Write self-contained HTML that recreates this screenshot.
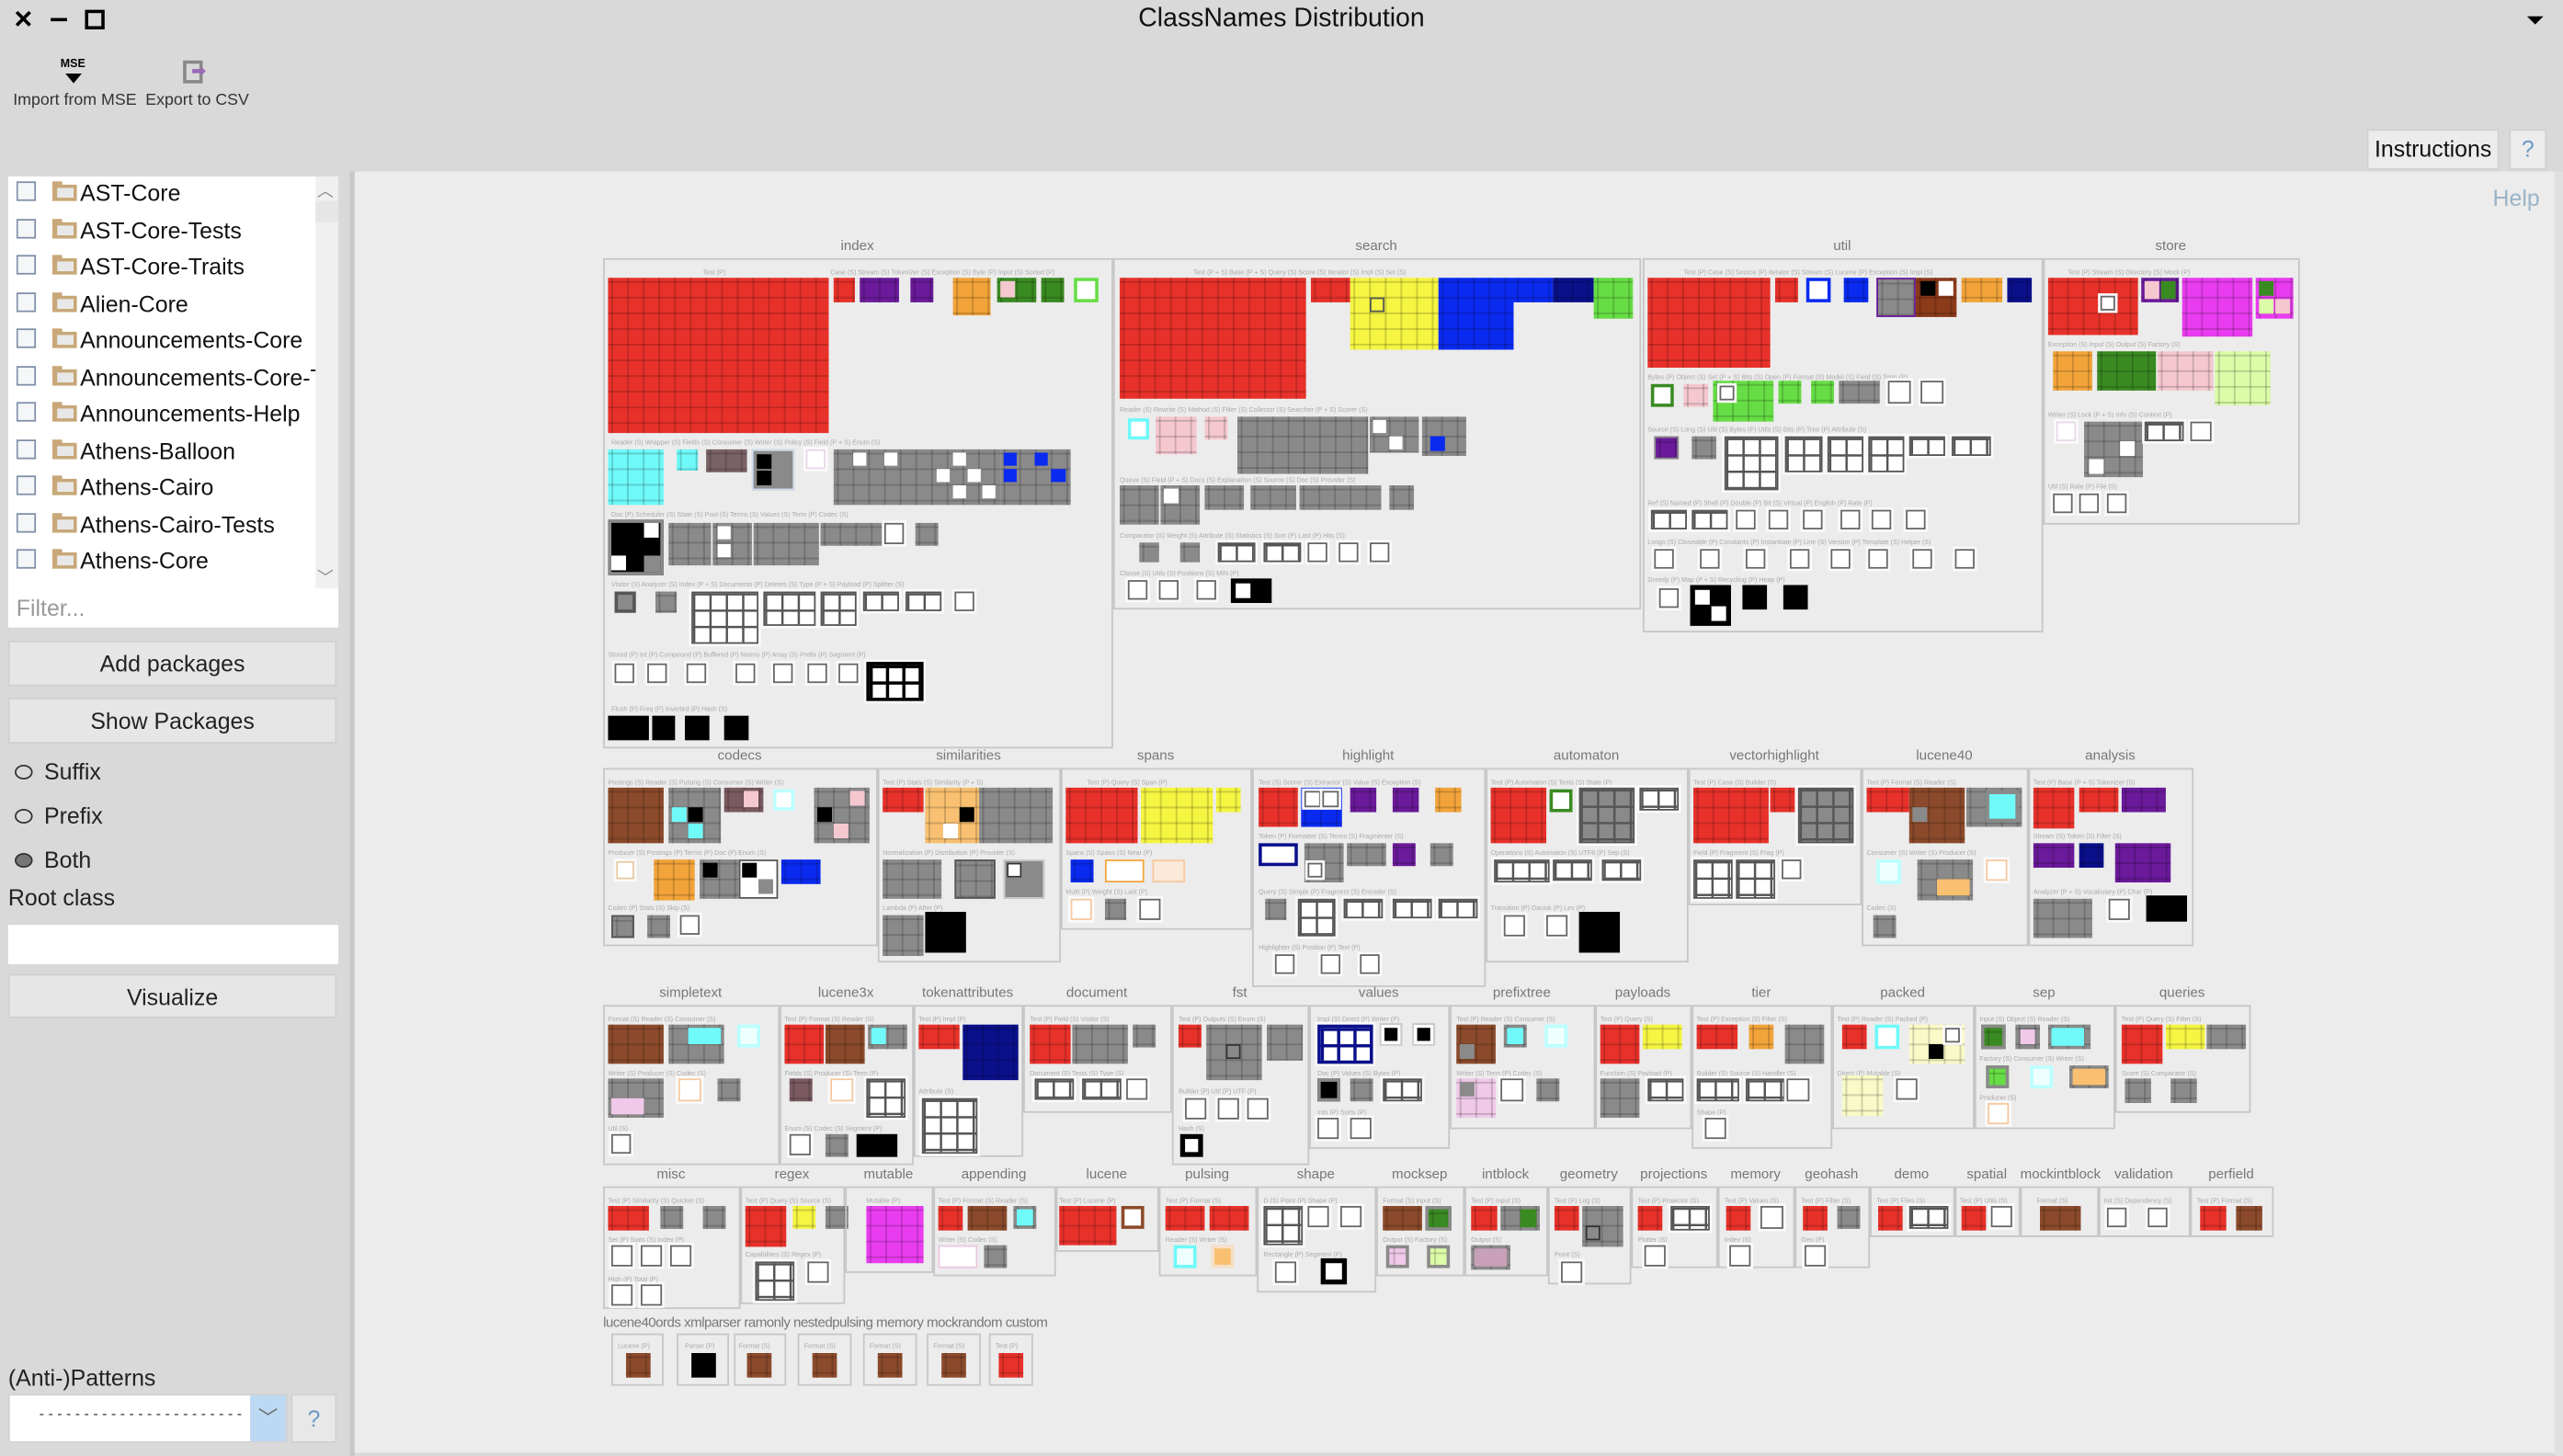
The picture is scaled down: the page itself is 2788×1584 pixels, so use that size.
<!DOCTYPE html>
<html><head><meta charset="utf-8">
<style>
html,body{margin:0;padding:0;width:2788px;height:1584px;overflow:hidden;background:#d9d9d9;font-family:"Liberation Sans",sans-serif}
#w{position:absolute;left:0;top:0;width:1568px;height:891px;transform:scale(1.77806,1.77778);transform-origin:0 0;background:#d9d9d9}
.a{position:absolute}
i{position:absolute;display:block;box-sizing:border-box}
.g{background-image:linear-gradient(rgba(0,0,0,.17) 1px,transparent 1px),linear-gradient(90deg,rgba(0,0,0,.17) 1px,transparent 1px);background-size:9.6px 9.6px;background-position:2px 2px}
.w{background:#fff;border:1.5px solid #666;box-shadow:0 0 0 1.5px #fafafa}
.wg{background-color:#fff;border:1.5px solid #555;background-image:linear-gradient(#555 1.5px,transparent 1.5px),linear-gradient(90deg,#555 1.5px,transparent 1.5px);background-size:10px 10px;box-shadow:0 0 0 1.5px #fafafa}
.pk{position:absolute;border:1px solid #c6c6c6;box-sizing:border-box}
.lb{position:absolute;font-size:8.5px;color:#777;text-align:center;white-space:nowrap}
.t{position:absolute;font-size:4px;color:#aaa;white-space:nowrap}
.btn{position:absolute;left:5px;width:201px;height:28px;background:#e6e6e6;border:1px solid #d0d0d0;box-sizing:border-box;font-size:14px;text-align:center;line-height:27px;color:#222}
.row{position:absolute;left:10px;width:183px;overflow:hidden;font-size:14px;color:#111;height:20px;line-height:20px;white-space:nowrap}
.row span{white-space:nowrap}
.cb{position:absolute;left:0;top:3px;width:12px;height:12px;border:1px solid #8090a8;background:#f4f6f8;box-sizing:border-box}
.fd{position:absolute;left:22px;top:5px;width:15px;height:10px;background:#c8a878}
.fd:before{content:"";position:absolute;left:0;top:-2px;width:6px;height:3px;background:#c8a878}
.fd:after{content:"";position:absolute;left:3px;top:2px;width:10px;height:6px;background:#e8e8e8}
.rd{position:absolute;left:9px;width:11px;height:9px;border:1px solid #333;border-radius:50%;box-sizing:border-box}
.rl{position:absolute;left:27px;font-size:14px;color:#222}
</style></head><body><div id="w">

<!-- title bar -->
<div class="a" style="left:8px;top:3px;font-size:15px;font-weight:bold">✕</div>
<div class="a" style="left:31px;top:11px;width:10px;height:2px;background:#000"></div>
<div class="a" style="left:52px;top:6px;width:8px;height:8px;border:2px solid #000"></div>
<div class="a" style="left:0;width:1568px;top:3px;text-align:center;font-size:16px;color:#111">ClassNames Distribution</div>
<div class="a" style="left:1546px;top:10px;width:0;height:0;border-left:5px solid transparent;border-right:5px solid transparent;border-top:5px solid #000"></div>

<!-- toolbar -->
<div class="a" style="left:37px;top:36px;font-size:7px;font-weight:bold">MSE</div>
<div class="a" style="left:40px;top:45px;width:0;height:0;border-left:5px solid transparent;border-right:5px solid transparent;border-top:6px solid #000"></div>
<div class="a" style="left:8px;top:56px;font-size:10px;color:#333">Import from MSE</div>
<div class="a" style="left:112px;top:37px;width:12px;height:14px;border:2px solid #888;box-sizing:border-box"></div>
<div class="a" style="left:117px;top:42px;color:#9a6ab8;font-size:11px;line-height:5px">➡</div>
<div class="a" style="left:89px;top:56px;font-size:10px;color:#333">Export to CSV</div>

<!-- left list -->
<div class="a" style="left:5px;top:108px;width:202px;height:276px;background:#fff"></div>
<div class="a" style="left:193px;top:108px;width:14px;height:252px;background:#f0f0f0"></div>
<div class="a" style="left:194px;top:108px;font-size:10px;color:#888">︿</div>
<div class="a" style="left:194px;top:345px;font-size:10px;color:#888">﹀</div>
<div class="a" style="left:193px;top:123px;width:14px;height:13px;background:#e6e6e6"></div>
<div class="row" style="top:108px"><span class="cb"></span><span class="fd"></span><span style="position:absolute;left:39px">AST-Core</span></div>
<div class="row" style="top:130.5px"><span class="cb"></span><span class="fd"></span><span style="position:absolute;left:39px">AST-Core-Tests</span></div>
<div class="row" style="top:153px"><span class="cb"></span><span class="fd"></span><span style="position:absolute;left:39px">AST-Core-Traits</span></div>
<div class="row" style="top:175.5px"><span class="cb"></span><span class="fd"></span><span style="position:absolute;left:39px">Alien-Core</span></div>
<div class="row" style="top:198px"><span class="cb"></span><span class="fd"></span><span style="position:absolute;left:39px">Announcements-Core</span></div>
<div class="row" style="top:220.5px"><span class="cb"></span><span class="fd"></span><span style="position:absolute;left:39px">Announcements-Core-Tests</span></div>
<div class="row" style="top:243px"><span class="cb"></span><span class="fd"></span><span style="position:absolute;left:39px">Announcements-Help</span></div>
<div class="row" style="top:265.5px"><span class="cb"></span><span class="fd"></span><span style="position:absolute;left:39px">Athens-Balloon</span></div>
<div class="row" style="top:288px"><span class="cb"></span><span class="fd"></span><span style="position:absolute;left:39px">Athens-Cairo</span></div>
<div class="row" style="top:310.5px"><span class="cb"></span><span class="fd"></span><span style="position:absolute;left:39px">Athens-Cairo-Tests</span></div>
<div class="row" style="top:333px"><span class="cb"></span><span class="fd"></span><span style="position:absolute;left:39px">Athens-Core</span></div>
<div class="a" style="left:10px;top:364px;font-size:14px;color:#999">Filter...</div>

<div class="btn" style="top:392px">Add packages</div>
<div class="btn" style="top:427px">Show Packages</div>
<div class="rd" style="top:468px"></div><div class="rl" style="top:464px">Suffix</div>
<div class="rd" style="top:495px"></div><div class="rl" style="top:491px">Prefix</div>
<div class="rd" style="top:522px;background:#777"></div><div class="rl" style="top:518px">Both</div>
<div class="a" style="left:5px;top:541px;font-size:14px;color:#222">Root class</div>
<div class="a" style="left:5px;top:566px;width:202px;height:24px;background:#fff"></div>
<div class="btn" style="top:596px;height:27px">Visualize</div>
<div class="a" style="left:5px;top:835px;font-size:14px;color:#222">(Anti-)Patterns</div>
<div class="a" style="left:5px;top:853px;width:171px;height:30px;background:#fff;border:1px solid #d0d0d0;box-sizing:border-box"></div>
<div class="a" style="left:24px;top:860px;font-size:9px;color:#333">- - - - - - - - - - - - - - - - - - - - - - -</div>
<div class="a" style="left:153px;top:854px;width:22px;height:28px;background:#bcd8f2"></div>
<div class="a" style="left:158px;top:859px;font-size:12px;color:#666">﹀</div>
<div class="a" style="left:178px;top:853px;width:28px;height:30px;background:#e8e8e8;border:1px solid #d0d0d0;box-sizing:border-box;text-align:center;line-height:28px;font-size:14px;color:#6a9ac8">?</div>

<!-- right area -->
<div class="a" style="left:214px;top:105px;width:3px;height:786px;background:#c8c8c8"></div>
<div class="a" style="left:217px;top:105px;width:1346px;height:784px;background:#ececec"></div>
<div class="a" style="left:1563px;top:105px;width:5px;height:786px;background:#e0e0e0"></div>
<div class="a" style="left:1448px;top:79px;width:81px;height:25px;background:#ececec;border:1px solid #d0d0d0;box-sizing:border-box;font-size:14px;text-align:center;line-height:23px;color:#111">Instructions</div>
<div class="a" style="left:1535px;top:79px;width:23px;height:25px;background:#ececec;border:1px solid #d0d0d0;box-sizing:border-box;font-size:14px;text-align:center;line-height:23px;color:#6a9ac8">?</div>
<div class="a" style="left:1525px;top:113px;font-size:14px;color:#9ab4c8">Help</div>

<!-- ===== Row 1 ===== -->
<div class="lb" style="left:369px;width:311px;top:145px">index</div>
<div class="pk" style="left:369px;top:158px;width:312px;height:300px"></div>
<div class="t" style="left:430px;top:164px">Test (P)</div><div class="t" style="left:508px;top:164px">Case (S) Stream (S) Tokenizer (S) Exception (S) Byte (P) Input (S) Sorted (P)</div>
<i class="g" style="left:372px;top:170px;width:135px;height:95px;background-color:#e8312a"></i>
<i class="g" style="left:510px;top:170px;width:13px;height:15px;background-color:#e8312a"></i>
<i class="g" style="left:526px;top:170px;width:24px;height:15px;background-color:#6a1a9a"></i>
<i class="g" style="left:557px;top:170px;width:14px;height:15px;background-color:#6a1a9a"></i>
<i class="g" style="left:583px;top:170px;width:23px;height:23px;background-color:#f2a43a"></i>
<i class="g" style="left:610px;top:170px;width:24px;height:15px;background-color:#3a8a22"></i><i style="left:612px;top:172px;width:9px;height:10px;background:#f5c8d0"></i>
<i class="g" style="left:637px;top:170px;width:14px;height:15px;background-color:#3a8a22"></i>
<i style="left:657px;top:170px;width:15px;height:15px;background:#fff;border:2.5px solid #66dd44"></i>
<div class="t" style="left:374px;top:268px">Reader (S) Wrapper (S) Fields (S) Consumer (S) Writer (S)   Policy (S)   Field (P + S)   Enum (S)</div>
<i class="g" style="left:372px;top:275px;width:34px;height:34px;background-color:#6ff9f9"></i>
<i class="g" style="left:414px;top:275px;width:13px;height:13px;background-color:#6ff9f9"></i>
<i class="g" style="left:432px;top:275px;width:25px;height:14px;background-color:#7a6266"></i>
<i style="left:460px;top:275px;width:26px;height:25px;background:#8a8a8a;border:1px solid #cde"></i><i style="left:463px;top:278px;width:9px;height:9px;background:#000"></i><i style="left:463px;top:288px;width:9px;height:9px;background:#000"></i>
<i class="w" style="left:493px;top:275px;width:12px;height:12px;border-color:#e8d8e8"></i>
<i class="g" style="left:510px;top:275px;width:102px;height:34px;background-color:#8a8a8a"></i>
<i style="left:522px;top:277px;width:8px;height:8px;background:#fff"></i><i style="left:541px;top:277px;width:8px;height:8px;background:#fff"></i><i style="left:583px;top:277px;width:8px;height:8px;background:#fff"></i><i style="left:573px;top:287px;width:8px;height:8px;background:#fff"></i><i style="left:592px;top:287px;width:8px;height:8px;background:#fff"></i><i style="left:583px;top:297px;width:8px;height:8px;background:#fff"></i><i style="left:601px;top:297px;width:8px;height:8px;background:#fff"></i>
<i class="g" style="left:612px;top:275px;width:43px;height:34px;background-color:#8a8a8a"></i>
<i style="left:614px;top:277px;width:8px;height:8px;background:#0a2af0"></i><i style="left:633px;top:277px;width:8px;height:8px;background:#0a2af0"></i><i style="left:614px;top:287px;width:8px;height:8px;background:#0a2af0"></i><i style="left:643px;top:287px;width:9px;height:8px;background:#0a2af0"></i>
<div class="t" style="left:374px;top:312px">Doc (P)  Scheduler (S) State (S) Pool (S) Terms (S) Values (S) Term (P) Codec (S)</div>
<i style="left:372px;top:318px;width:34px;height:34px;background:#000;border:2px solid #8a8a8a"></i><i style="left:394px;top:320px;width:9px;height:9px;background:#fff"></i><i style="left:374px;top:340px;width:9px;height:9px;background:#fff"></i><i style="left:394px;top:340px;width:10px;height:10px;background:#8a8a8a"></i>
<i class="g" style="left:409px;top:320px;width:26px;height:26px;background-color:#8a8a8a"></i>
<i class="g" style="left:436px;top:320px;width:24px;height:26px;background-color:#8a8a8a"></i><i style="left:439px;top:322px;width:8px;height:8px;background:#fff"></i><i style="left:439px;top:333px;width:8px;height:8px;background:#fff"></i>
<i class="g" style="left:461px;top:320px;width:40px;height:26px;background-color:#8a8a8a"></i>
<i class="g" style="left:502px;top:320px;width:40px;height:14px;background-color:#8a8a8a"></i>
<i class="w" style="left:541px;top:320px;width:12px;height:13px"></i>
<i class="g" style="left:560px;top:320px;width:14px;height:14px;background-color:#8a8a8a"></i>
<div class="t" style="left:374px;top:355px">Visitor (S) Analyzer (S)  Index (P + S)  Documents (P) Deletes (S) Type (P + S) Payload (P) Splitter (S)</div>
<i style="left:376px;top:362px;width:13px;height:13px;background:#8a8a8a;border:2px solid #555"></i>
<i class="g" style="left:401px;top:362px;width:13px;height:13px;background-color:#8a8a8a"></i>
<i class="wg" style="left:423px;top:362px;width:41px;height:32px"></i>
<i class="wg" style="left:467px;top:362px;width:32px;height:21px"></i>
<i class="wg" style="left:502px;top:362px;width:22px;height:21px"></i>
<i class="wg" style="left:528px;top:362px;width:22px;height:12px"></i>
<i class="wg" style="left:554px;top:362px;width:22px;height:12px"></i>
<i class="w" style="left:584px;top:362px;width:12px;height:12px"></i>
<div class="t" style="left:372px;top:398px">Stored (P) Int (P) Compound (P) Buffered (P) Norms (P) Array (S) Prefix (P)  Segment (P)</div>
<i class="w" style="left:376px;top:406px;width:12px;height:12px"></i><i class="w" style="left:396px;top:406px;width:12px;height:12px"></i><i class="w" style="left:420px;top:406px;width:12px;height:12px"></i><i class="w" style="left:450px;top:406px;width:12px;height:12px"></i><i class="w" style="left:473px;top:406px;width:12px;height:12px"></i><i class="w" style="left:494px;top:406px;width:12px;height:12px"></i><i class="w" style="left:513px;top:406px;width:12px;height:12px"></i>
<i class="wg" style="left:530px;top:405px;width:35px;height:24px;border:2.5px solid #000;background-image:linear-gradient(#000 2px,transparent 2px),linear-gradient(90deg,#000 2px,transparent 2px)"></i>
<div class="t" style="left:374px;top:431px">Flush (P) Freq (P) Inverted (P) Hash (S)</div>
<i style="left:372px;top:438px;width:25px;height:15px;background:#000"></i><i style="left:399px;top:438px;width:14px;height:15px;background:#000"></i><i style="left:419px;top:438px;width:15px;height:15px;background:#000"></i><i style="left:443px;top:438px;width:15px;height:15px;background:#000"></i>

<div class="lb" style="left:681px;width:322px;top:145px">search</div>
<div class="pk" style="left:681px;top:158px;width:323px;height:215px"></div>
<div class="t" style="left:730px;top:164px">Test (P + S)   Base (P + S)  Query (S)   Score (S) Iterator (S) Impl (S) Set (S)</div>
<i class="g" style="left:685px;top:170px;width:114px;height:74px;background-color:#e8312a"></i>
<i class="g" style="left:802px;top:170px;width:24px;height:15px;background-color:#e8312a"></i>
<i class="g" style="left:826px;top:170px;width:54px;height:44px;background-color:#f5f542"></i><i style="left:838px;top:182px;width:9px;height:9px;border:1px solid #555"></i>
<i class="g" style="left:880px;top:170px;width:46px;height:44px;background-color:#0a2af0"></i>
<i class="g" style="left:926px;top:170px;width:24px;height:15px;background-color:#0a2af0"></i>
<i class="g" style="left:950px;top:170px;width:25px;height:15px;background-color:#0a108a"></i>
<i class="g" style="left:975px;top:170px;width:24px;height:25px;background-color:#66dd44"></i>
<div class="t" style="left:685px;top:248px">Reader (S) Rewrite (S) Method (S)  Filter (S)  Collector (S) Searcher (P + S) Scorer (S)</div>
<i style="left:690px;top:256px;width:13px;height:13px;background:#fff;border:2px solid #6ff9f9"></i>
<i class="g" style="left:707px;top:255px;width:25px;height:23px;background-color:#f5c8d0"></i>
<i class="g" style="left:737px;top:255px;width:14px;height:14px;background-color:#f5c8d0"></i>
<i class="g" style="left:757px;top:255px;width:80px;height:35px;background-color:#8a8a8a"></i>
<i class="g" style="left:838px;top:255px;width:30px;height:22px;background-color:#8a8a8a"></i><i style="left:840px;top:257px;width:8px;height:8px;background:#fff"></i><i style="left:850px;top:267px;width:8px;height:8px;background:#fff"></i>
<i class="g" style="left:870px;top:255px;width:27px;height:24px;background-color:#8a8a8a"></i><i style="left:875px;top:267px;width:9px;height:9px;background:#0a2af0"></i>
<div class="t" style="left:685px;top:291px">Queue (S) Field (P + S) Docs (S) Explanation (S) Source (S) Doc (S) Provider (S)</div>
<i class="g" style="left:685px;top:297px;width:24px;height:24px;background-color:#8a8a8a"></i>
<i class="g" style="left:710px;top:297px;width:24px;height:24px;background-color:#8a8a8a"></i><i style="left:712px;top:299px;width:9px;height:9px;background:#fff"></i>
<i class="g" style="left:737px;top:297px;width:24px;height:15px;background-color:#8a8a8a"></i>
<i class="g" style="left:765px;top:297px;width:28px;height:15px;background-color:#8a8a8a"></i>
<i class="g" style="left:795px;top:297px;width:50px;height:15px;background-color:#8a8a8a"></i>
<i class="g" style="left:850px;top:297px;width:15px;height:15px;background-color:#8a8a8a"></i>
<div class="t" style="left:685px;top:325px">Comparator (S) Weight (S) Attribute (S) Statistics (S) Sort (P) Last (P) Hits (S)</div>
<i class="g" style="left:697px;top:332px;width:12px;height:12px;background-color:#8a8a8a"></i><i class="g" style="left:722px;top:332px;width:12px;height:12px;background-color:#8a8a8a"></i>
<i class="wg" style="left:745px;top:332px;width:23px;height:12px"></i><i class="wg" style="left:773px;top:332px;width:23px;height:12px"></i>
<i class="w" style="left:800px;top:332px;width:12px;height:12px"></i><i class="w" style="left:819px;top:332px;width:12px;height:12px"></i><i class="w" style="left:838px;top:332px;width:12px;height:12px"></i>
<div class="t" style="left:685px;top:348px">Clause (S) Utils (S) Positions (S)  MIN (P)</div>
<i class="w" style="left:690px;top:355px;width:12px;height:12px"></i><i class="w" style="left:709px;top:355px;width:12px;height:12px"></i><i class="w" style="left:732px;top:355px;width:12px;height:12px"></i>
<i style="left:753px;top:354px;width:25px;height:15px;background:#000"></i><i style="left:756px;top:357px;width:9px;height:9px;background:#fff"></i>

<div class="lb" style="left:1005px;width:244px;top:145px">util</div>
<div class="pk" style="left:1005px;top:158px;width:245px;height:229px"></div>
<div class="t" style="left:1030px;top:164px">Test (P)   Case (S) Source (P) Iterator (S) Stream (S) Lucene (P) Exception (S) Impl (S)</div>
<i class="g" style="left:1008px;top:170px;width:75px;height:55px;background-color:#e8312a"></i>
<i class="g" style="left:1086px;top:170px;width:14px;height:15px;background-color:#e8312a"></i>
<i style="left:1105px;top:170px;width:15px;height:15px;background:#fff;border:2.5px solid #0a2af0"></i>
<i class="g" style="left:1128px;top:170px;width:15px;height:15px;background-color:#0a2af0"></i>
<i class="g" style="left:1148px;top:170px;width:24px;height:24px;background-color:#8a8a8a;border:1.5px solid #6a1a9a"></i>
<i class="g" style="left:1172px;top:170px;width:25px;height:24px;background-color:#8b3a1a"></i><i style="left:1175px;top:172px;width:9px;height:9px;background:#000"></i><i style="left:1186px;top:172px;width:9px;height:9px;background:#fff"></i>
<i class="g" style="left:1200px;top:170px;width:25px;height:15px;background-color:#f2a43a"></i>
<i class="g" style="left:1228px;top:170px;width:15px;height:15px;background-color:#0a108a"></i>
<div class="t" style="left:1008px;top:228px">Bytes (P) Object (S) Set (P + S) Bits (S) Open (P) Format (S) Model (S) Field (S) Term (P)</div>
<i style="left:1010px;top:235px;width:14px;height:14px;background:#fff;border:2.5px solid #3a8a22"></i>
<i class="g" style="left:1030px;top:235px;width:15px;height:14px;background-color:#f5c8d0"></i>
<i class="g" style="left:1048px;top:233px;width:37px;height:25px;background-color:#66dd44"></i><i class="w" style="left:1052px;top:236px;width:9px;height:9px"></i>
<i class="g" style="left:1088px;top:233px;width:14px;height:14px;background-color:#66dd44"></i>
<i class="g" style="left:1108px;top:233px;width:14px;height:14px;background-color:#66dd44"></i>
<i class="g" style="left:1125px;top:233px;width:25px;height:14px;background-color:#8a8a8a"></i>
<i class="w" style="left:1155px;top:233px;width:14px;height:14px"></i><i class="w" style="left:1175px;top:233px;width:14px;height:14px"></i>
<div class="t" style="left:1008px;top:260px">Source (S) Long (S) Util (S) Bytes (P) Utils (S) Bits (P) Tree (P) Attribute (S)</div>
<i class="g" style="left:1012px;top:267px;width:15px;height:14px;background-color:#6a1a9a;border:1.5px solid #8a8a8a"></i>
<i class="g" style="left:1035px;top:267px;width:15px;height:14px;background-color:#8a8a8a"></i>
<i class="wg" style="left:1055px;top:267px;width:33px;height:33px"></i>
<i class="wg" style="left:1092px;top:267px;width:23px;height:22px"></i>
<i class="wg" style="left:1118px;top:267px;width:22px;height:22px"></i>
<i class="wg" style="left:1143px;top:267px;width:22px;height:22px"></i>
<i class="wg" style="left:1168px;top:267px;width:22px;height:12px"></i>
<i class="wg" style="left:1194px;top:267px;width:24px;height:12px"></i>
<div class="t" style="left:1008px;top:305px">Ref (S) Named (P) Shell (P) Double (P) Bit (S) Virtual (P) English (P) Rate (P)</div>
<i class="wg" style="left:1010px;top:312px;width:22px;height:12px"></i><i class="wg" style="left:1035px;top:312px;width:22px;height:12px"></i>
<i class="w" style="left:1062px;top:312px;width:12px;height:12px"></i><i class="w" style="left:1082px;top:312px;width:12px;height:12px"></i><i class="w" style="left:1103px;top:312px;width:12px;height:12px"></i><i class="w" style="left:1126px;top:312px;width:12px;height:12px"></i><i class="w" style="left:1145px;top:312px;width:12px;height:12px"></i><i class="w" style="left:1166px;top:312px;width:12px;height:12px"></i>
<div class="t" style="left:1008px;top:329px">Longs (S) Closeable (P) Constants (P) Instantiate (P) Line (S) Version (P) Template (S) Helper (S)</div>
<i class="w" style="left:1012px;top:336px;width:12px;height:12px"></i><i class="w" style="left:1040px;top:336px;width:12px;height:12px"></i><i class="w" style="left:1068px;top:336px;width:12px;height:12px"></i><i class="w" style="left:1095px;top:336px;width:12px;height:12px"></i><i class="w" style="left:1120px;top:336px;width:12px;height:12px"></i><i class="w" style="left:1143px;top:336px;width:12px;height:12px"></i><i class="w" style="left:1170px;top:336px;width:12px;height:12px"></i><i class="w" style="left:1196px;top:336px;width:12px;height:12px"></i>
<div class="t" style="left:1008px;top:352px">Greedy (P) Map (P + S) Recycling (P) Heap (P)</div>
<i class="w" style="left:1015px;top:360px;width:12px;height:12px"></i>
<i style="left:1034px;top:358px;width:25px;height:25px;background:#000"></i><i style="left:1037px;top:361px;width:9px;height:9px;background:#fff"></i><i style="left:1047px;top:371px;width:9px;height:9px;background:#fff"></i>
<i style="left:1066px;top:358px;width:15px;height:15px;background:#000"></i><i style="left:1091px;top:358px;width:15px;height:15px;background:#000"></i>

<div class="lb" style="left:1250px;width:156px;top:145px">store</div>
<div class="pk" style="left:1250px;top:158px;width:157px;height:163px"></div>
<div class="t" style="left:1265px;top:164px">Test (P)    Stream (S) Directory (S) Mock (P)</div>
<i class="g" style="left:1253px;top:170px;width:55px;height:35px;background-color:#e8312a"></i><i class="w" style="left:1285px;top:181px;width:9px;height:9px;border-width:1px"></i>
<i class="g" style="left:1310px;top:170px;width:23px;height:15px;background-color:#6a1a9a"></i><i style="left:1312px;top:172px;width:9px;height:11px;background:#f5c8d0"></i><i style="left:1322px;top:172px;width:9px;height:11px;background:#3a8a22"></i>
<i class="g" style="left:1335px;top:170px;width:43px;height:36px;background-color:#e93cf0"></i>
<i class="g" style="left:1380px;top:170px;width:23px;height:25px;background-color:#e93cf0"></i><i style="left:1382px;top:172px;width:9px;height:9px;background:#3a8a22"></i><i style="left:1382px;top:183px;width:9px;height:9px;background:#dcfca8"></i><i style="left:1392px;top:183px;width:9px;height:9px;background:#f5c8d0"></i>
<div class="t" style="left:1253px;top:208px">Exception (S) Input (S)  Output (S)  Factory (S)</div>
<i class="g" style="left:1256px;top:215px;width:24px;height:24px;background-color:#f2a43a"></i>
<i class="g" style="left:1283px;top:215px;width:36px;height:24px;background-color:#3a8a22"></i>
<i class="g" style="left:1320px;top:215px;width:34px;height:24px;background-color:#f5c8d0"></i>
<i class="g" style="left:1355px;top:215px;width:34px;height:33px;background-color:#dcfca8"></i>
<div class="t" style="left:1253px;top:251px">Writer (S) Lock (P + S) Info (S) Context (P)</div>
<i class="w" style="left:1258px;top:258px;width:12px;height:12px;border-color:#e8d8e8"></i>
<i class="g" style="left:1275px;top:258px;width:36px;height:34px;background-color:#8a8a8a"></i><i style="left:1297px;top:270px;width:9px;height:9px;background:#fff"></i><i style="left:1278px;top:281px;width:9px;height:9px;background:#fff"></i>
<i class="wg" style="left:1312px;top:258px;width:24px;height:12px"></i><i class="w" style="left:1340px;top:258px;width:13px;height:12px"></i>
<div class="t" style="left:1253px;top:295px">Util (S) Rate (P) File (S)</div>
<i class="w" style="left:1256px;top:302px;width:12px;height:12px"></i><i class="w" style="left:1272px;top:302px;width:12px;height:12px"></i><i class="w" style="left:1289px;top:302px;width:12px;height:12px"></i>

<!-- ===== Row 2 ===== -->
<div class="lb" style="left:369px;width:167px;top:457px">codecs</div>
<div class="pk" style="left:369px;top:470px;width:168px;height:109px"></div>
<div class="t" style="left:372px;top:476px">Postings (S) Reader (S) Pulsing (S) Consumer (S) Writer (S)</div>
<i class="g" style="left:372px;top:482px;width:34px;height:34px;background-color:#8b4a2b"></i>
<i class="g" style="left:409px;top:482px;width:32px;height:34px;background-color:#8a8a8a"></i><i style="left:411px;top:494px;width:9px;height:9px;background:#6ff9f9"></i><i style="left:421px;top:494px;width:9px;height:9px;background:#000"></i><i style="left:421px;top:504px;width:9px;height:9px;background:#6ff9f9"></i>
<i class="g" style="left:443px;top:482px;width:24px;height:15px;background-color:#7a5a60"></i><i style="left:455px;top:484px;width:9px;height:10px;background:#f5c8d0"></i>
<i style="left:473px;top:483px;width:13px;height:13px;background:#fff;border:2px solid #bff"></i>
<i class="g" style="left:498px;top:482px;width:34px;height:34px;background-color:#8a8a8a"></i><i style="left:500px;top:494px;width:9px;height:9px;background:#000"></i><i style="left:510px;top:504px;width:9px;height:9px;background:#f5c8d0"></i><i style="left:520px;top:484px;width:9px;height:9px;background:#f5c8d0"></i>
<div class="t" style="left:372px;top:519px">Producer (S) Postings (P) Terms (P) Doc (P) Enum (S)</div>
<i class="w" style="left:377px;top:527px;width:11px;height:11px;border-color:#e8c8a0"></i>
<i class="g" style="left:400px;top:526px;width:25px;height:25px;background-color:#f2a43a"></i>
<i class="g" style="left:428px;top:526px;width:24px;height:24px;background-color:#8a8a8a"></i><i style="left:430px;top:528px;width:9px;height:9px;background:#000"></i>
<i style="left:452px;top:526px;width:24px;height:24px;background:#fff;border:1.5px solid #555"></i><i style="left:454px;top:528px;width:9px;height:9px;background:#000"></i><i style="left:464px;top:538px;width:9px;height:9px;background:#8a8a8a"></i>
<i class="g" style="left:478px;top:526px;width:24px;height:15px;background-color:#0a2af0"></i>
<div class="t" style="left:372px;top:553px">Codec (P) Stats (S) Skip (S)</div>
<i class="g" style="left:374px;top:560px;width:14px;height:14px;background-color:#8a8a8a;border:1.5px solid #555"></i><i class="g" style="left:396px;top:560px;width:14px;height:14px;background-color:#8a8a8a"></i><i class="w" style="left:416px;top:560px;width:12px;height:12px"></i>

<div class="lb" style="left:537px;width:111px;top:457px">similarities</div>
<div class="pk" style="left:537px;top:470px;width:112px;height:119px"></div>
<div class="t" style="left:540px;top:476px">Test (P) Stats (S) Similarity (P + S)</div>
<i class="g" style="left:540px;top:482px;width:25px;height:15px;background-color:#e8312a"></i>
<i class="g" style="left:566px;top:482px;width:33px;height:34px;background-color:#f8c070"></i><i style="left:587px;top:494px;width:9px;height:9px;background:#000"></i><i style="left:577px;top:504px;width:9px;height:9px;background:#fff"></i>
<i class="g" style="left:599px;top:482px;width:45px;height:34px;background-color:#8a8a8a"></i>
<div class="t" style="left:540px;top:519px">Normalization (P) Distribution (P) Provider (S)</div>
<i class="g" style="left:540px;top:526px;width:36px;height:24px;background-color:#8a8a8a"></i>
<i class="g" style="left:584px;top:526px;width:25px;height:24px;background-color:#8a8a8a;border:1.5px solid #555"></i>
<i style="left:614px;top:526px;width:25px;height:24px;background:#8a8a8a;border:1px solid #ccc"></i><i style="left:616px;top:528px;width:9px;height:9px;background:#fff;border:1.5px solid #333"></i>
<div class="t" style="left:540px;top:553px">Lambda (P) After (P)</div>
<i class="g" style="left:540px;top:560px;width:25px;height:25px;background-color:#8a8a8a"></i>
<i style="left:566px;top:558px;width:25px;height:25px;background:#000"></i>

<div class="lb" style="left:649px;width:116px;top:457px">spans</div>
<div class="pk" style="left:649px;top:470px;width:117px;height:99px"></div>
<div class="t" style="left:665px;top:476px">Test (P)   Query (S)  Span (P)</div>
<i class="g" style="left:652px;top:482px;width:44px;height:34px;background-color:#e8312a"></i>
<i class="g" style="left:698px;top:482px;width:44px;height:34px;background-color:#f5f542"></i>
<i class="g" style="left:744px;top:482px;width:15px;height:15px;background-color:#f5f542"></i>
<div class="t" style="left:652px;top:519px">Spans (S) Spans (S) Near (P)</div>
<i class="g" style="left:655px;top:526px;width:14px;height:14px;background-color:#0a2af0"></i>
<i style="left:676px;top:526px;width:24px;height:14px;background:#fff;border:1.5px solid #f2a43a"></i>
<i style="left:705px;top:526px;width:20px;height:14px;background:#fbe8d8;border:1px solid #f5c8a0"></i>
<div class="t" style="left:652px;top:543px">Multi (P) Weight (S) Last (P)</div>
<i class="w" style="left:655px;top:550px;width:13px;height:13px;border-color:#f5c8a0"></i><i class="g" style="left:676px;top:550px;width:13px;height:13px;background-color:#8a8a8a"></i><i class="w" style="left:697px;top:550px;width:13px;height:13px"></i>

<div class="lb" style="left:766px;width:142px;top:457px">highlight</div>
<div class="pk" style="left:766px;top:470px;width:143px;height:134px"></div>
<div class="t" style="left:770px;top:476px">Test (S) Scorer (S) Extractor (S) Value (S) Exception (S)</div>
<i class="g" style="left:770px;top:482px;width:24px;height:24px;background-color:#e8312a"></i>
<i class="g" style="left:796px;top:482px;width:25px;height:24px;background-color:#0a2af0"></i><i class="w" style="left:798px;top:484px;width:10px;height:10px;border-width:1px"></i><i class="w" style="left:809px;top:484px;width:10px;height:10px;border-width:1px"></i>
<i class="g" style="left:826px;top:482px;width:16px;height:15px;background-color:#6a1a9a"></i><i class="g" style="left:852px;top:482px;width:16px;height:15px;background-color:#6a1a9a"></i><i class="g" style="left:878px;top:482px;width:16px;height:15px;background-color:#f2a43a"></i>
<div class="t" style="left:770px;top:509px">Token (P) Formatter (S) Terms (S) Fragmenter (S)</div>
<i style="left:770px;top:516px;width:24px;height:14px;background:#fff;border:2px solid #0a108a"></i>
<i class="g" style="left:798px;top:516px;width:24px;height:24px;background-color:#8a8a8a"></i><i class="w" style="left:800px;top:528px;width:9px;height:9px;border-width:1px"></i>
<i class="g" style="left:824px;top:516px;width:24px;height:14px;background-color:#8a8a8a"></i>
<i class="g" style="left:852px;top:516px;width:14px;height:14px;background-color:#6a1a9a"></i><i class="g" style="left:875px;top:516px;width:14px;height:14px;background-color:#8a8a8a"></i>
<div class="t" style="left:770px;top:543px">Query (S) Simple (P) Fragment (S) Encoder (S)</div>
<i class="g" style="left:774px;top:550px;width:13px;height:13px;background-color:#8a8a8a"></i><i class="wg" style="left:794px;top:550px;width:23px;height:23px"></i>
<i class="wg" style="left:822px;top:550px;width:24px;height:12px"></i><i class="wg" style="left:852px;top:550px;width:24px;height:12px"></i><i class="wg" style="left:880px;top:550px;width:24px;height:12px"></i>
<div class="t" style="left:770px;top:577px">Highlighter (S) Position (P) Text (P)</div>
<i class="w" style="left:780px;top:584px;width:12px;height:12px"></i><i class="w" style="left:808px;top:584px;width:12px;height:12px"></i><i class="w" style="left:832px;top:584px;width:12px;height:12px"></i>

<div class="lb" style="left:909px;width:123px;top:457px">automaton</div>
<div class="pk" style="left:909px;top:470px;width:124px;height:119px"></div>
<div class="t" style="left:912px;top:476px">Test (P) Automaton (S) Tests (S) State (P)</div>
<i class="g" style="left:912px;top:482px;width:34px;height:34px;background-color:#e8312a"></i>
<i style="left:948px;top:483px;width:14px;height:14px;background:#fff;border:2.5px solid #3a8a22"></i>
<i class="wg" style="left:966px;top:482px;width:34px;height:34px;background-color:#8a8a8a"></i>
<i class="wg" style="left:1003px;top:482px;width:24px;height:14px"></i>
<div class="t" style="left:912px;top:519px">Operations (S) Automaton (S) UTF8 (P) Sep (S)</div>
<i class="wg" style="left:914px;top:526px;width:34px;height:14px"></i><i class="wg" style="left:950px;top:526px;width:24px;height:13px"></i><i class="wg" style="left:980px;top:526px;width:24px;height:13px"></i>
<div class="t" style="left:912px;top:553px">Transition (P) Daciuk (P) Lev (P)</div>
<i class="w" style="left:920px;top:560px;width:13px;height:13px"></i><i class="w" style="left:946px;top:560px;width:13px;height:13px"></i><i style="left:966px;top:558px;width:25px;height:25px;background:#000"></i>

<div class="lb" style="left:1033px;width:105px;top:457px">vectorhighlight</div>
<div class="pk" style="left:1033px;top:470px;width:106px;height:84px"></div>
<div class="t" style="left:1036px;top:476px">Test (P)    Case (S) Builder (S)</div>
<i class="g" style="left:1036px;top:482px;width:46px;height:34px;background-color:#e8312a"></i>
<i class="g" style="left:1083px;top:482px;width:15px;height:15px;background-color:#e8312a"></i>
<i class="wg" style="left:1100px;top:482px;width:34px;height:34px;background-color:#8a8a8a"></i>
<div class="t" style="left:1036px;top:519px">Field (P) Fragment (S) Frag (P)</div>
<i class="wg" style="left:1036px;top:526px;width:24px;height:24px"></i><i class="wg" style="left:1062px;top:526px;width:24px;height:24px"></i><i class="w" style="left:1090px;top:526px;width:12px;height:12px"></i>

<div class="lb" style="left:1139px;width:101px;top:457px">lucene40</div>
<div class="pk" style="left:1139px;top:470px;width:102px;height:109px"></div>
<div class="t" style="left:1142px;top:476px">Test (P)  Format (S)  Reader (S)</div>
<i class="g" style="left:1142px;top:482px;width:26px;height:15px;background-color:#e8312a"></i>
<i class="g" style="left:1168px;top:482px;width:34px;height:34px;background-color:#8b4a2b"></i><i style="left:1170px;top:494px;width:9px;height:9px;background:#8a8a8a"></i>
<i class="g" style="left:1203px;top:482px;width:34px;height:24px;background-color:#8a8a8a"></i><i style="left:1215px;top:484px;width:20px;height:19px;background:#6ff9f9;border:2px solid #8a8a8a"></i>
<div class="t" style="left:1142px;top:519px">Consumer (S) Writer (S) Producer (S)</div>
<i style="left:1148px;top:526px;width:15px;height:15px;background:#eff;border:2px solid #bff"></i>
<i class="g" style="left:1173px;top:526px;width:34px;height:25px;background-color:#8a8a8a"></i><i style="left:1185px;top:538px;width:20px;height:10px;background:#f8c070"></i>
<i class="w" style="left:1215px;top:526px;width:13px;height:13px;border-color:#f5c8a0"></i>
<div class="t" style="left:1142px;top:553px">Codec (S)</div>
<i class="g" style="left:1146px;top:560px;width:14px;height:14px;background-color:#8a8a8a"></i>

<div class="lb" style="left:1241px;width:100px;top:457px">analysis</div>
<div class="pk" style="left:1241px;top:470px;width:101px;height:109px"></div>
<div class="t" style="left:1244px;top:476px">Test (P)  Base (P + S) Tokenizer (S)</div>
<i class="g" style="left:1244px;top:482px;width:25px;height:25px;background-color:#e8312a"></i>
<i class="g" style="left:1272px;top:482px;width:24px;height:15px;background-color:#e8312a"></i>
<i class="g" style="left:1298px;top:482px;width:27px;height:15px;background-color:#6a1a9a"></i>
<div class="t" style="left:1244px;top:509px">Stream (S) Token (S) Filter (S)</div>
<i class="g" style="left:1244px;top:516px;width:25px;height:15px;background-color:#6a1a9a"></i>
<i class="g" style="left:1272px;top:516px;width:15px;height:15px;background-color:#0a108a"></i>
<i class="g" style="left:1294px;top:516px;width:34px;height:24px;background-color:#6a1a9a"></i>
<div class="t" style="left:1244px;top:543px">Analyzer (P + S) Vocabulary (P) Char (P)</div>
<i class="g" style="left:1244px;top:550px;width:36px;height:24px;background-color:#8a8a8a"></i>
<i class="w" style="left:1290px;top:550px;width:13px;height:13px"></i>
<i style="left:1313px;top:548px;width:25px;height:16px;background:#000"></i>

<!-- ===== Row 3 ===== -->
<div class="lb" style="left:369px;width:107px;top:602px">simpletext</div>
<div class="pk" style="left:369px;top:615px;width:108px;height:98px"></div>
<div class="t" style="left:372px;top:621px">Format (S)  Reader (S) Consumer (S)</div>
<i class="g" style="left:372px;top:627px;width:34px;height:24px;background-color:#8b4a2b"></i>
<i class="g" style="left:409px;top:627px;width:34px;height:24px;background-color:#8a8a8a"></i><i style="left:421px;top:629px;width:20px;height:10px;background:#6ff9f9"></i>
<i style="left:451px;top:627px;width:14px;height:14px;background:#eff;border:2px solid #bff"></i>
<div class="t" style="left:372px;top:654px">Writer (S) Producer (S) Codec (S)</div>
<i class="g" style="left:372px;top:660px;width:34px;height:24px;background-color:#8a8a8a"></i><i style="left:374px;top:672px;width:20px;height:10px;background:#f0c8e8"></i>
<i class="w" style="left:415px;top:660px;width:14px;height:14px;border-color:#f5c8a0"></i><i class="g" style="left:439px;top:660px;width:14px;height:14px;background-color:#8a8a8a"></i>
<div class="t" style="left:372px;top:688px">Util (S)</div>
<i class="w" style="left:374px;top:694px;width:12px;height:12px"></i>

<div class="lb" style="left:477px;width:81px;top:602px">lucene3x</div>
<div class="pk" style="left:477px;top:615px;width:82px;height:98px"></div>
<div class="t" style="left:480px;top:621px">Test (P) Format (S) Reader (S)</div>
<i class="g" style="left:480px;top:627px;width:24px;height:24px;background-color:#e8312a"></i>
<i class="g" style="left:505px;top:627px;width:24px;height:24px;background-color:#8b4a2b"></i>
<i class="g" style="left:531px;top:627px;width:24px;height:15px;background-color:#8a8a8a"></i><i style="left:533px;top:629px;width:9px;height:10px;background:#6ff9f9"></i>
<div class="t" style="left:480px;top:654px">Fields (S) Producer (S) Term (P)</div>
<i class="g" style="left:483px;top:660px;width:14px;height:14px;background-color:#7a5a60"></i><i class="w" style="left:508px;top:660px;width:14px;height:14px;border-color:#f5c8a0"></i><i class="wg" style="left:530px;top:660px;width:24px;height:24px"></i>
<div class="t" style="left:480px;top:688px">Enum (S) Codec (S) Segment (P)</div>
<i class="w" style="left:483px;top:694px;width:13px;height:13px"></i><i class="g" style="left:505px;top:694px;width:14px;height:14px;background-color:#8a8a8a"></i><i style="left:524px;top:694px;width:25px;height:14px;background:#000"></i>

<div class="lb" style="left:559px;width:66px;top:602px">tokenattributes</div>
<div class="pk" style="left:559px;top:615px;width:67px;height:93px"></div>
<div class="t" style="left:562px;top:621px">Test (P)  Impl (P)</div>
<i class="g" style="left:562px;top:627px;width:25px;height:15px;background-color:#e8312a"></i>
<i class="g" style="left:589px;top:627px;width:34px;height:34px;background-color:#0a108a"></i>
<div class="t" style="left:562px;top:665px">Attribute (S)</div>
<i class="wg" style="left:564px;top:672px;width:34px;height:34px"></i>

<div class="lb" style="left:626px;width:90px;top:602px">document</div>
<div class="pk" style="left:626px;top:615px;width:91px;height:66px"></div>
<div class="t" style="left:630px;top:621px">Test (P)  Field (S)  Visitor (S)</div>
<i class="g" style="left:630px;top:627px;width:25px;height:24px;background-color:#e8312a"></i>
<i class="g" style="left:656px;top:627px;width:34px;height:24px;background-color:#8a8a8a"></i>
<i class="g" style="left:693px;top:627px;width:14px;height:14px;background-color:#8a8a8a"></i>
<div class="t" style="left:630px;top:654px">Document (S) Tests (S) Type (S)</div>
<i class="wg" style="left:633px;top:660px;width:24px;height:13px"></i><i class="wg" style="left:662px;top:660px;width:24px;height:13px"></i><i class="w" style="left:689px;top:660px;width:13px;height:13px"></i>

<div class="lb" style="left:717px;width:83px;top:602px">fst</div>
<div class="pk" style="left:717px;top:615px;width:84px;height:98px"></div>
<div class="t" style="left:721px;top:621px">Test (P) Outputs (S) Enum (S)</div>
<i class="g" style="left:721px;top:627px;width:14px;height:14px;background-color:#e8312a"></i>
<i class="g" style="left:738px;top:627px;width:34px;height:34px;background-color:#8a8a8a"></i><i style="left:750px;top:639px;width:9px;height:9px;border:1.5px solid #333"></i>
<i class="g" style="left:775px;top:627px;width:22px;height:22px;background-color:#8a8a8a"></i>
<div class="t" style="left:721px;top:665px">Builder (P) Util (P) UTF (P)</div>
<i class="w" style="left:725px;top:672px;width:13px;height:13px"></i><i class="w" style="left:745px;top:672px;width:13px;height:13px"></i><i class="w" style="left:763px;top:672px;width:13px;height:13px"></i>
<div class="t" style="left:721px;top:688px">Hash (S)</div>
<i style="left:722px;top:694px;width:14px;height:14px;background:#fff;border:3px solid #000"></i>

<div class="lb" style="left:801px;width:85px;top:602px">values</div>
<div class="pk" style="left:801px;top:615px;width:86px;height:88px"></div>
<div class="t" style="left:806px;top:621px">Impl (S)  Direct (P) Writer (P)</div>
<i class="wg" style="left:806px;top:627px;width:34px;height:24px;border:2px solid #0a108a;background-image:linear-gradient(#0a108a 2px,transparent 2px),linear-gradient(90deg,#0a108a 2px,transparent 2px)"></i>
<i style="left:845px;top:627px;width:12px;height:12px;background:#000;border:2px solid #fff;box-shadow:0 0 0 1px #ccc"></i><i style="left:865px;top:627px;width:12px;height:12px;background:#000;border:2px solid #fff;box-shadow:0 0 0 1px #ccc"></i>
<div class="t" style="left:806px;top:654px">Doc (P) Values (S) Bytes (P)</div>
<i style="left:806px;top:660px;width:14px;height:14px;background:#000;border:2px solid #888"></i><i class="g" style="left:826px;top:660px;width:14px;height:14px;background-color:#8a8a8a"></i><i class="wg" style="left:846px;top:660px;width:24px;height:14px"></i>
<div class="t" style="left:806px;top:678px">Ints (P) Sorts (P)</div>
<i class="w" style="left:806px;top:684px;width:13px;height:13px"></i><i class="w" style="left:826px;top:684px;width:13px;height:13px"></i>

<div class="lb" style="left:887px;width:88px;top:602px">prefixtree</div>
<div class="pk" style="left:887px;top:615px;width:89px;height:76px"></div>
<div class="t" style="left:891px;top:621px">Test (P) Reader (S) Consumer (S)</div>
<i class="g" style="left:891px;top:627px;width:24px;height:24px;background-color:#8b4a2b"></i><i style="left:893px;top:639px;width:9px;height:9px;background:#8a8a8a"></i>
<i class="g" style="left:920px;top:627px;width:14px;height:14px;background-color:#8a8a8a"></i><i style="left:922px;top:629px;width:10px;height:10px;background:#6ff9f9"></i>
<i style="left:945px;top:627px;width:14px;height:14px;background:#eff;border:2px solid #bff"></i>
<div class="t" style="left:891px;top:654px">Writer (S) Term (P) Codec (S)</div>
<i class="g" style="left:891px;top:660px;width:24px;height:24px;background-color:#f0c8e8"></i><i style="left:893px;top:662px;width:9px;height:9px;background:#8a8a8a"></i>
<i class="w" style="left:918px;top:660px;width:14px;height:14px;border-color:#666"></i><i class="g" style="left:940px;top:660px;width:14px;height:14px;background-color:#8a8a8a"></i>

<div class="lb" style="left:976px;width:58px;top:602px">payloads</div>
<div class="pk" style="left:976px;top:615px;width:59px;height:76px"></div>
<div class="t" style="left:979px;top:621px">Test (P) Query (S)</div>
<i class="g" style="left:979px;top:627px;width:24px;height:24px;background-color:#e8312a"></i>
<i class="g" style="left:1005px;top:627px;width:24px;height:15px;background-color:#f5f542"></i>
<div class="t" style="left:979px;top:654px">Function (S) Payload (P)</div>
<i class="g" style="left:979px;top:660px;width:24px;height:24px;background-color:#8a8a8a"></i><i class="wg" style="left:1008px;top:660px;width:22px;height:14px"></i>

<div class="lb" style="left:1035px;width:85px;top:602px">tier</div>
<div class="pk" style="left:1035px;top:615px;width:86px;height:88px"></div>
<div class="t" style="left:1038px;top:621px">Test (P) Exception (S) Filter (S)</div>
<i class="g" style="left:1038px;top:627px;width:25px;height:15px;background-color:#e8312a"></i>
<i class="g" style="left:1070px;top:627px;width:15px;height:15px;background-color:#f2a43a"></i>
<i class="g" style="left:1092px;top:627px;width:24px;height:24px;background-color:#8a8a8a"></i>
<div class="t" style="left:1038px;top:654px">Builder (S) Source (S) Handler (S)</div>
<i class="wg" style="left:1038px;top:660px;width:26px;height:14px"></i><i class="wg" style="left:1068px;top:660px;width:24px;height:14px"></i><i class="w" style="left:1093px;top:660px;width:14px;height:14px"></i>
<div class="t" style="left:1038px;top:678px">Shape (P)</div>
<i class="w" style="left:1043px;top:684px;width:13px;height:13px"></i>

<div class="lb" style="left:1121px;width:86px;top:602px">packed</div>
<div class="pk" style="left:1121px;top:615px;width:87px;height:76px"></div>
<div class="t" style="left:1124px;top:621px">Test (P) Reader (S) Packed (P)</div>
<i class="g" style="left:1127px;top:627px;width:15px;height:15px;background-color:#e8312a"></i>
<i style="left:1147px;top:627px;width:15px;height:15px;background:#fff;border:2px solid #6ff9f9"></i>
<i class="g" style="left:1168px;top:627px;width:34px;height:24px;background-color:#fafac8"></i><i style="left:1180px;top:639px;width:9px;height:9px;background:#000"></i><i class="w" style="left:1190px;top:629px;width:9px;height:9px;border-width:1px"></i>
<div class="t" style="left:1124px;top:654px">Direct (P) Mutable (S)</div>
<i class="g" style="left:1127px;top:658px;width:25px;height:25px;background-color:#fafac8"></i><i class="w" style="left:1160px;top:660px;width:13px;height:13px"></i>

<div class="lb" style="left:1208px;width:85px;top:602px">sep</div>
<div class="pk" style="left:1208px;top:615px;width:86px;height:76px"></div>
<div class="t" style="left:1211px;top:621px">Input (S) Object (S) Reader (S)</div>
<i class="g" style="left:1212px;top:627px;width:15px;height:15px;background-color:#3a8a22;border:2px solid #8a8a8a"></i>
<i class="g" style="left:1233px;top:627px;width:15px;height:15px;background-color:#8a8a8a"></i><i style="left:1236px;top:630px;width:9px;height:9px;background:#f0c8e8"></i>
<i class="g" style="left:1253px;top:627px;width:26px;height:15px;background-color:#8a8a8a"></i><i style="left:1255px;top:629px;width:20px;height:11px;background:#6ff9f9"></i>
<div class="t" style="left:1211px;top:645px">Factory (S) Consumer (S) Writer (S)</div>
<i class="g" style="left:1215px;top:652px;width:14px;height:14px;background-color:#66dd44;border:2px solid #8a8a8a"></i>
<i style="left:1242px;top:652px;width:14px;height:14px;background:#eff;border:2px solid #bff"></i>
<i class="g" style="left:1266px;top:652px;width:24px;height:14px;background-color:#8a8a8a"></i><i style="left:1268px;top:654px;width:20px;height:10px;background:#f8c070"></i>
<div class="t" style="left:1211px;top:669px">Producer (S)</div>
<i class="w" style="left:1216px;top:675px;width:13px;height:13px;border-color:#f5c8a0"></i>

<div class="lb" style="left:1294px;width:82px;top:602px">queries</div>
<div class="pk" style="left:1294px;top:615px;width:83px;height:66px"></div>
<div class="t" style="left:1298px;top:621px">Test (P) Query (S) Filter (S)</div>
<i class="g" style="left:1298px;top:627px;width:25px;height:24px;background-color:#e8312a"></i>
<i class="g" style="left:1325px;top:627px;width:24px;height:15px;background-color:#f5f542"></i>
<i class="g" style="left:1350px;top:627px;width:24px;height:15px;background-color:#8a8a8a"></i>
<div class="t" style="left:1298px;top:654px">Score (S) Comparator (S)</div>
<i class="g" style="left:1300px;top:660px;width:16px;height:15px;background-color:#8a8a8a"></i><i class="g" style="left:1328px;top:660px;width:16px;height:15px;background-color:#8a8a8a"></i>

<!-- ===== Row 4 ===== -->
<div class="lb" style="left:369px;width:83px;top:713px">misc</div>
<div class="pk" style="left:369px;top:726px;width:84px;height:75px"></div>
<div class="t" style="left:372px;top:732px">Test (P) Similarity (S) Quicker (S)</div>
<i class="g" style="left:372px;top:738px;width:25px;height:15px;background-color:#e8312a"></i>
<i class="g" style="left:404px;top:738px;width:14px;height:14px;background-color:#8a8a8a"></i><i class="g" style="left:430px;top:738px;width:14px;height:14px;background-color:#8a8a8a"></i>
<div class="t" style="left:372px;top:756px">Set (P) Stats (S) Index (P)</div>
<i class="w" style="left:374px;top:762px;width:13px;height:13px"></i><i class="w" style="left:392px;top:762px;width:13px;height:13px"></i><i class="w" style="left:410px;top:762px;width:13px;height:13px"></i>
<div class="t" style="left:372px;top:780px">High (P) Total (P)</div>
<i class="w" style="left:374px;top:786px;width:13px;height:13px"></i><i class="w" style="left:392px;top:786px;width:13px;height:13px"></i>

<div class="lb" style="left:453px;width:63px;top:713px">regex</div>
<div class="pk" style="left:453px;top:726px;width:64px;height:72px"></div>
<div class="t" style="left:456px;top:732px">Test (P) Query (S) Source (S)</div>
<i class="g" style="left:456px;top:738px;width:25px;height:25px;background-color:#e8312a"></i>
<i class="g" style="left:485px;top:738px;width:14px;height:14px;background-color:#f5f542"></i><i class="g" style="left:505px;top:738px;width:14px;height:14px;background-color:#8a8a8a"></i>
<div class="t" style="left:456px;top:765px">Capabilities (S) Regex (P)</div>
<i class="wg" style="left:462px;top:772px;width:24px;height:24px"></i><i class="w" style="left:494px;top:772px;width:13px;height:13px"></i>

<div class="lb" style="left:517px;width:53px;top:713px">mutable</div>
<div class="pk" style="left:517px;top:726px;width:54px;height:53px"></div>
<div class="t" style="left:530px;top:732px">Mutable (P)</div>
<i class="g" style="left:530px;top:738px;width:35px;height:35px;background-color:#e93cf0"></i>

<div class="lb" style="left:571px;width:74px;top:713px">appending</div>
<div class="pk" style="left:571px;top:726px;width:75px;height:55px"></div>
<div class="t" style="left:574px;top:732px">Test (P) Format (S) Reader (S)</div>
<i class="g" style="left:574px;top:738px;width:15px;height:15px;background-color:#e8312a"></i>
<i class="g" style="left:592px;top:738px;width:24px;height:15px;background-color:#8b4a2b"></i>
<i class="g" style="left:620px;top:738px;width:14px;height:14px;background-color:#8a8a8a"></i><i style="left:622px;top:740px;width:10px;height:10px;background:#6ff9f9"></i>
<div class="t" style="left:574px;top:756px">Writer (S) Codec (S)</div>
<i style="left:574px;top:762px;width:24px;height:14px;background:#fff;border:1.5px solid #e8c8e0"></i><i class="g" style="left:602px;top:762px;width:14px;height:14px;background-color:#8a8a8a"></i>

<div class="lb" style="left:646px;width:62px;top:713px">lucene</div>
<div class="pk" style="left:646px;top:726px;width:63px;height:40px"></div>
<div class="t" style="left:648px;top:732px">Test (P)   Lucene (P)</div>
<i class="g" style="left:648px;top:738px;width:35px;height:24px;background-color:#e8312a"></i>
<i style="left:686px;top:738px;width:14px;height:14px;background:#fff;border:2.5px solid #8b4a2b"></i>

<div class="lb" style="left:709px;width:59px;top:713px">pulsing</div>
<div class="pk" style="left:709px;top:726px;width:60px;height:55px"></div>
<div class="t" style="left:713px;top:732px">Test (P) Format (S)</div>
<i class="g" style="left:713px;top:738px;width:24px;height:15px;background-color:#e8312a"></i><i class="g" style="left:740px;top:738px;width:24px;height:15px;background-color:#e8312a"></i>
<div class="t" style="left:713px;top:756px">Reader (S) Writer (S)</div>
<i style="left:718px;top:762px;width:14px;height:14px;background:#eff;border:2px solid #6ff9f9"></i><i style="left:741px;top:762px;width:14px;height:14px;background:#f8c070;border:2px solid #f5e0c8"></i>

<div class="lb" style="left:769px;width:72px;top:713px">shape</div>
<div class="pk" style="left:769px;top:726px;width:73px;height:65px"></div>
<div class="t" style="left:773px;top:732px">D (S) Point (P) Shape (P)</div>
<i class="wg" style="left:773px;top:738px;width:24px;height:24px"></i><i class="w" style="left:800px;top:738px;width:13px;height:13px"></i><i class="w" style="left:820px;top:738px;width:13px;height:13px"></i>
<div class="t" style="left:773px;top:765px">Rectangle (P) Segment (P)</div>
<i class="w" style="left:780px;top:772px;width:13px;height:13px"></i><i style="left:808px;top:770px;width:16px;height:16px;background:#fff;border:3px solid #000"></i>

<div class="lb" style="left:842px;width:53px;top:713px">mocksep</div>
<div class="pk" style="left:842px;top:726px;width:54px;height:55px"></div>
<div class="t" style="left:846px;top:732px">Format (S) Input (S)</div>
<i class="g" style="left:846px;top:738px;width:24px;height:15px;background-color:#8b4a2b"></i>
<i class="g" style="left:872px;top:738px;width:16px;height:15px;background-color:#3a8a22;border:2px solid #8a8a8a"></i>
<div class="t" style="left:846px;top:756px">Output (S) Factory (S)</div>
<i class="g" style="left:848px;top:762px;width:14px;height:14px;background-color:#f0c8e8;border:2px solid #8a8a8a"></i>
<i class="g" style="left:873px;top:762px;width:14px;height:14px;background-color:#dcfca8;border:2px solid #8a8a8a"></i>

<div class="lb" style="left:896px;width:50px;top:713px">intblock</div>
<div class="pk" style="left:896px;top:726px;width:51px;height:55px"></div>
<div class="t" style="left:900px;top:732px">Test (P) Input (S)</div>
<i class="g" style="left:900px;top:738px;width:16px;height:15px;background-color:#e8312a"></i>
<i class="g" style="left:918px;top:738px;width:24px;height:15px;background-color:#8a8a8a"></i><i style="left:930px;top:740px;width:10px;height:11px;background:#3a8a22"></i>
<div class="t" style="left:900px;top:756px">Output (S)</div>
<i class="g" style="left:900px;top:762px;width:24px;height:15px;background-color:#8a8a8a"></i><i style="left:902px;top:764px;width:20px;height:11px;background:#c8a0b8"></i>

<div class="lb" style="left:947px;width:50px;top:713px">geometry</div>
<div class="pk" style="left:947px;top:726px;width:51px;height:60px"></div>
<div class="t" style="left:951px;top:732px">Test (P) Log (S)</div>
<i class="g" style="left:951px;top:738px;width:15px;height:15px;background-color:#e8312a"></i>
<i class="g" style="left:968px;top:738px;width:25px;height:25px;background-color:#8a8a8a"></i><i style="left:970px;top:750px;width:9px;height:9px;border:1.5px solid #333"></i>
<div class="t" style="left:951px;top:765px">Point (S)</div>
<i class="w" style="left:955px;top:772px;width:13px;height:13px"></i>

<div class="lb" style="left:998px;width:52px;top:713px">projections</div>
<div class="pk" style="left:998px;top:726px;width:53px;height:50px"></div>
<div class="t" style="left:1002px;top:732px">Test (P) Projector (S)</div>
<i class="g" style="left:1002px;top:738px;width:15px;height:15px;background-color:#e8312a"></i><i class="wg" style="left:1022px;top:738px;width:24px;height:15px"></i>
<div class="t" style="left:1002px;top:756px">Plotter (S)</div>
<i class="w" style="left:1006px;top:762px;width:13px;height:13px"></i>

<div class="lb" style="left:1051px;width:46px;top:713px">memory</div>
<div class="pk" style="left:1051px;top:726px;width:47px;height:50px"></div>
<div class="t" style="left:1055px;top:732px">Test (P) Values (S)</div>
<i class="g" style="left:1056px;top:738px;width:15px;height:15px;background-color:#e8312a"></i><i class="w" style="left:1077px;top:738px;width:14px;height:14px"></i>
<div class="t" style="left:1055px;top:756px">Index (S)</div>
<i class="w" style="left:1058px;top:762px;width:13px;height:13px"></i>

<div class="lb" style="left:1098px;width:45px;top:713px">geohash</div>
<div class="pk" style="left:1098px;top:726px;width:46px;height:50px"></div>
<div class="t" style="left:1102px;top:732px">Test (P) Filter (S)</div>
<i class="g" style="left:1103px;top:738px;width:15px;height:15px;background-color:#e8312a"></i><i class="g" style="left:1124px;top:738px;width:14px;height:14px;background-color:#8a8a8a"></i>
<div class="t" style="left:1102px;top:756px">Geo (P)</div>
<i class="w" style="left:1104px;top:762px;width:13px;height:13px"></i>

<div class="lb" style="left:1144px;width:51px;top:713px">demo</div>
<div class="pk" style="left:1144px;top:726px;width:52px;height:31px"></div>
<div class="t" style="left:1148px;top:732px">Test (P) Files (S)</div>
<i class="g" style="left:1149px;top:738px;width:15px;height:15px;background-color:#e8312a"></i><i class="wg" style="left:1168px;top:738px;width:24px;height:14px"></i>

<div class="lb" style="left:1196px;width:39px;top:713px">spatial</div>
<div class="pk" style="left:1196px;top:726px;width:40px;height:31px"></div>
<div class="t" style="left:1199px;top:732px">Test (P) Utils (S)</div>
<i class="g" style="left:1200px;top:738px;width:15px;height:15px;background-color:#e8312a"></i><i class="w" style="left:1218px;top:738px;width:13px;height:13px"></i>

<div class="lb" style="left:1236px;width:47px;top:713px">mockintblock</div>
<div class="pk" style="left:1236px;top:726px;width:48px;height:31px"></div>
<div class="t" style="left:1246px;top:732px">Format (S)</div>
<i class="g" style="left:1248px;top:738px;width:25px;height:15px;background-color:#8b4a2b"></i>

<div class="lb" style="left:1284px;width:55px;top:713px">validation</div>
<div class="pk" style="left:1284px;top:726px;width:56px;height:31px"></div>
<div class="t" style="left:1287px;top:732px">Init (S) Dependency (S)</div>
<i class="w" style="left:1289px;top:739px;width:12px;height:12px"></i><i class="w" style="left:1314px;top:739px;width:12px;height:12px"></i>

<div class="lb" style="left:1340px;width:50px;top:713px">perfield</div>
<div class="pk" style="left:1340px;top:726px;width:51px;height:31px"></div>
<div class="t" style="left:1344px;top:732px">Test (P) Format (S)</div>
<i class="g" style="left:1346px;top:738px;width:16px;height:15px;background-color:#e8312a"></i><i class="g" style="left:1368px;top:738px;width:16px;height:15px;background-color:#8b4a2b"></i>

<!-- ===== Row 5 ===== -->
<div class="lb" style="left:369px;top:804px;text-align:left;letter-spacing:-0.3px">lucene40ords xmlparser ramonly nestedpulsing memory mockrandom custom</div>
<div class="pk" style="left:374px;top:816px;width:32px;height:32px"></div><div class="t" style="left:378px;top:821px">Lucene (P)</div><i class="g" style="left:383px;top:828px;width:15px;height:15px;background-color:#8b4a2b"></i>
<div class="pk" style="left:414px;top:816px;width:32px;height:32px"></div><div class="t" style="left:419px;top:821px">Parser (P)</div><i style="left:423px;top:828px;width:15px;height:15px;background:#000"></i>
<div class="pk" style="left:449px;top:816px;width:32px;height:32px"></div><div class="t" style="left:452px;top:821px">Format (S)</div><i class="g" style="left:457px;top:828px;width:15px;height:15px;background-color:#8b4a2b"></i>
<div class="pk" style="left:488px;top:816px;width:33px;height:32px"></div><div class="t" style="left:492px;top:821px">Format (S)</div><i class="g" style="left:497px;top:828px;width:15px;height:15px;background-color:#8b4a2b"></i>
<div class="pk" style="left:528px;top:816px;width:33px;height:32px"></div><div class="t" style="left:532px;top:821px">Format (S)</div><i class="g" style="left:537px;top:828px;width:15px;height:15px;background-color:#8b4a2b"></i>
<div class="pk" style="left:567px;top:816px;width:33px;height:32px"></div><div class="t" style="left:571px;top:821px">Format (S)</div><i class="g" style="left:576px;top:828px;width:15px;height:15px;background-color:#8b4a2b"></i>
<div class="pk" style="left:605px;top:816px;width:27px;height:32px"></div><div class="t" style="left:609px;top:821px">Test (P)</div><i class="g" style="left:611px;top:828px;width:15px;height:15px;background-color:#e8312a"></i>

</div></body></html>
